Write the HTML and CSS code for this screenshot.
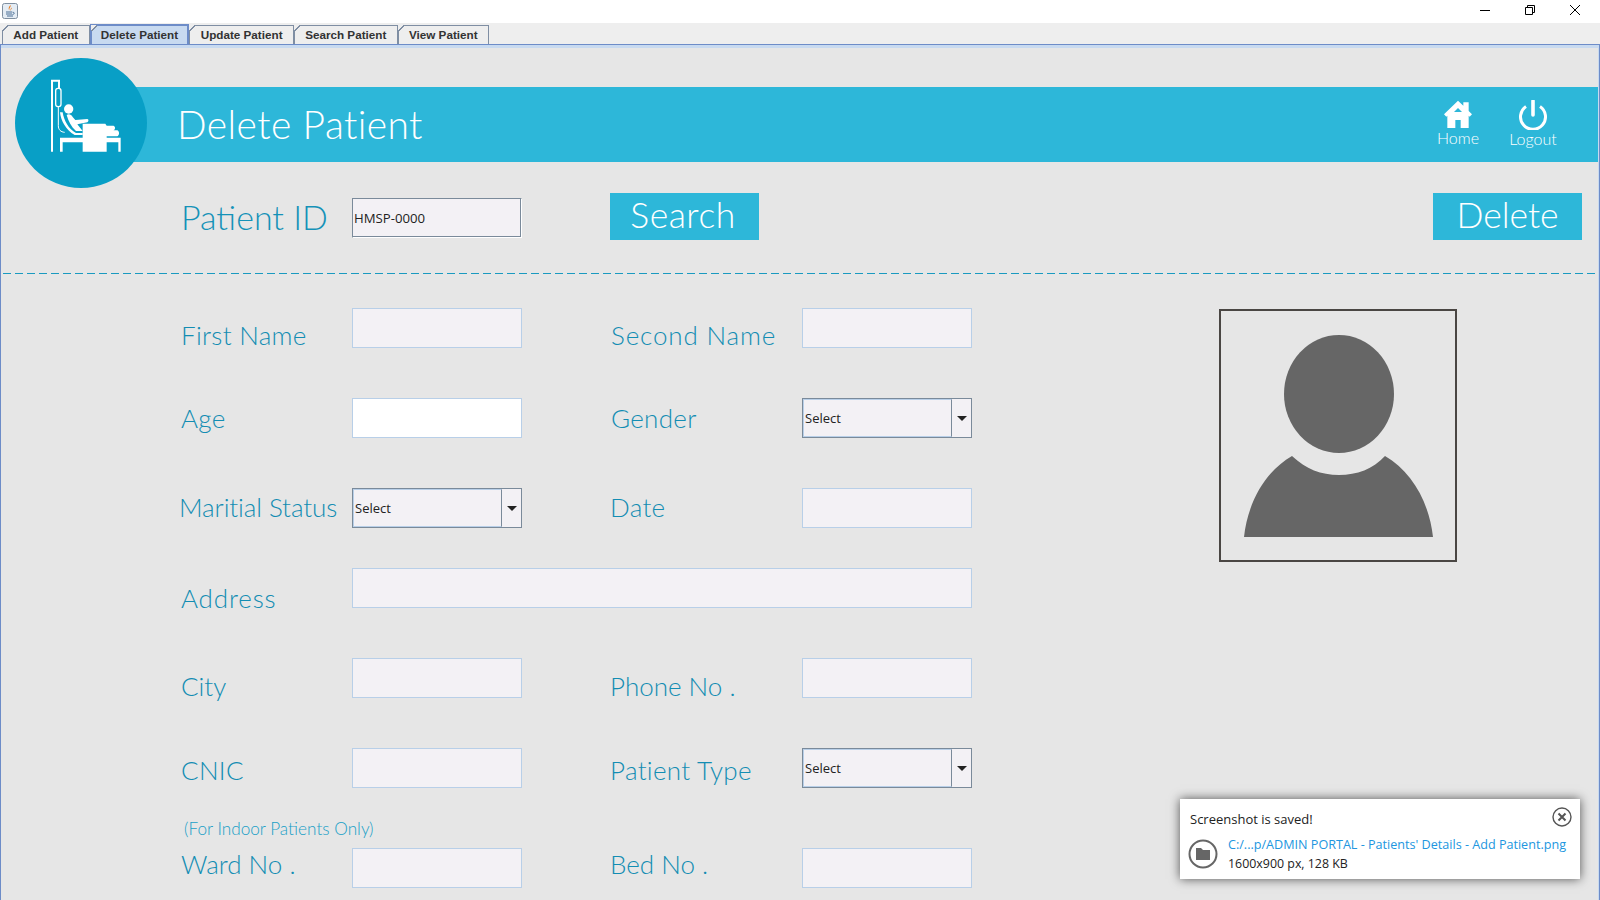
FILE: index.html
```html
<!DOCTYPE html>
<html lang="en">
<head>
    <meta charset="UTF-8">
    <meta name="viewport" content="width=device-width, initial-scale=1.0">
    <title>Delete Patient</title>
    <link rel="stylesheet" href="styles.css">
</head>
<body>
    <div id="window">
        <div class="titlebar">
            <svg class="app-icon" viewBox="0 0 16 16" width="16" height="16">
                <rect x="0.5" y="0.5" width="15" height="15" rx="2" fill="#e4ecf4" stroke="#7f8fa0"/>
                <path d="M8.5 2C9.5 4 6.5 5 7.5 7.5C6 6 6.5 4 8.5 2Z" fill="#e8791c"/>
                <path d="M10 4.5C9.8 6 8.5 6.5 9 8C8 7 8.5 5.5 10 4.5Z" fill="#e8791c"/>
                <path d="M4 9H10M4 11H10M5 13H11M10.5 9.2C13 9 12.5 11.5 10.5 11.5" fill="none" stroke="#4a6f96" stroke-width="1"/>
            </svg>
            <div class="win-controls">
                <svg viewBox="0 0 10 10" width="10" height="10"><path d="M0 5.5H10" stroke="#000" fill="none"/></svg>
                <svg viewBox="0 0 10 10" width="10" height="10"><path d="M0.5 2.5H7.5V9.5H0.5ZM2.5 2.5V0.5H9.5V7.5H7.5" stroke="#000" fill="none"/></svg>
                <svg viewBox="0 0 10 10" width="10" height="10"><path d="M0 0L10 10M10 0L0 10" stroke="#000" fill="none"/></svg>
            </div>
        </div>

        <div class="tabs">
            <div class="tab">Add Patient</div>
            <div class="tab active">Delete Patient</div>
            <div class="tab">Update Patient</div>
            <div class="tab">Search Patient</div>
            <div class="tab">View Patient</div>
        </div>

        <div class="panel">
            <div class="banner">
                <div class="logo">
                    <svg viewBox="15 9 396 390" width="132" height="130">
                        <path d="M126 290V77H147V100" fill="none" stroke="#fff" stroke-width="6"/>
                        <rect x="137" y="100" width="16" height="55" rx="7" fill="none" stroke="#fff" stroke-width="4"/>
                        <path d="M145 155V212C145 224 152 231 164 232" fill="none" stroke="#fff" stroke-width="3"/>
                        <circle cx="176" cy="162" r="14" fill="#fff"/>
                        <path d="M150 172C152 196 168 226 194 240H218V234H198C176 222 162 198 158 172Z" fill="#fff"/>
                        <path d="M170 180C176 176 184 178 188 186L196 195L232 192C237 193 236 200 232 202L202 208L218 228H198C184 216 175 198 170 180Z" fill="#fff"/>
                        <path d="M218 206H286L290 212H310C317 214 317 224 310 226H322C329 228 329 242 322 244H290V248H332V290H325V262H290V290H218V262H158V290H150V248H218Z" fill="#fff"/>
                    </svg>
                </div>
                <h1 class="banner-title">Delete Patient</h1>
                <div class="banner-links">
                    <div class="banner-link">
                        <svg viewBox="0 0 84 84" width="28" height="28">
                            <path fill="#fff" fill-rule="evenodd" d="M42 2L58 17V7H74V33L84 43L77 50L74 47V84H50V60H34V84H10V47L7 50L0 43ZM42 24L30 36H54Z"/>
                        </svg>
                        <span>Home</span>
                    </div>
                    <div class="banner-link link-logout">
                        <svg viewBox="0 0 30 30" width="30" height="30">
                            <path d="M8 6.5A12.5 12.5 0 1 0 22 6.5" fill="none" stroke="#fff" stroke-width="3"/>
                            <path d="M15 1V15" stroke="#fff" stroke-width="3.6" stroke-linecap="round"/>
                        </svg>
                        <span>Logout</span>
                    </div>
                </div>
            </div>

            <div class="search-row">
                <label class="id-label">Patient ID</label>
                <input class="id-input" type="text" value="HMSP-0000">
                <button class="action-btn search-btn">Search</button>
                <button class="action-btn delete-btn">Delete</button>
            </div>

            <div class="divider"></div>

            <div class="details">
                <div class="form">
                    <div class="row row-first">
                        <label class="field-label">First Name</label>
                        <input class="field" type="text">
                        <label class="field-label second wide-label">Second Name</label>
                        <input class="field" type="text">
                    </div>
                    <div class="row row-mid">
                        <label class="field-label">Age</label>
                        <input class="field field-white" type="text">
                        <label class="field-label second">Gender</label>
                        <div class="select"><span class="select-text">Select</span><span class="select-arrow"></span></div>
                    </div>
                    <div class="row row-mid row-marital">
                        <label class="field-label marital">Maritial Status</label>
                        <div class="select"><span class="select-text">Select</span><span class="select-arrow"></span></div>
                        <label class="field-label second tight">Date</label>
                        <input class="field" type="text">
                    </div>
                    <div class="row row-address">
                        <label class="field-label wide-label">Address</label>
                        <input class="field field-wide" type="text">
                    </div>
                    <div class="row row-city">
                        <label class="field-label">City</label>
                        <input class="field" type="text">
                        <label class="field-label second tight">Phone No .</label>
                        <input class="field" type="text">
                    </div>
                    <div class="row row-cnic">
                        <label class="field-label">CNIC</label>
                        <input class="field" type="text">
                        <label class="field-label second tight">Patient Type</label>
                        <div class="select"><span class="select-text">Select</span><span class="select-arrow"></span></div>
                    </div>
                    <div class="note">(For Indoor Patients Only)</div>
                    <div class="row row-ward">
                        <label class="field-label">Ward No .</label>
                        <input class="field" type="text">
                        <label class="field-label second tight">Bed No .</label>
                        <input class="field" type="text">
                    </div>
                </div>

                <div class="photo">
                    <svg viewBox="0 0 234 249" width="234" height="249">
                        <ellipse cx="118" cy="83" rx="55" ry="59" fill="#666"/>
                        <path d="M23 226C27 190 45 160 71 145C85 158 100 164 118 164C136 164 152 158 164 145C190 160 208 190 212 226Z" fill="#666"/>
                    </svg>
                </div>
            </div>
        </div>

        <div class="toast">
            <div class="toast-title">Screenshot is saved!</div>
            <svg class="toast-close" viewBox="0 0 20 20" width="20" height="20">
                <circle cx="10" cy="10" r="9" fill="none" stroke="#555" stroke-width="1.4"/>
                <path d="M6.5 6.5L13.5 13.5M13.5 6.5L6.5 13.5" stroke="#555" stroke-width="2"/>
            </svg>
            <div class="toast-body">
                <svg viewBox="0 0 30 30" width="30" height="30">
                    <circle cx="15" cy="15" r="13.5" fill="none" stroke="#666" stroke-width="2"/>
                    <path d="M8 9H13L15 11H22V21H8Z" fill="#666"/>
                </svg>
                <div>
                    <div class="toast-link">C:/...p/ADMIN PORTAL - Patients' Details - Add Patient.png</div>
                    <div class="toast-info">1600x900 px, 128 KB</div>
                </div>
            </div>
        </div>
    </div>
</body>
</html>
```

FILE: styles.css
```css
* {
    box-sizing: border-box;
}

body {
    margin: 0;
    font-family: "Liberation Sans", Arial, sans-serif;
    background: #e6e6e6;
}

#window {
    position: relative;
    width: 1600px;
    height: 900px;
    overflow: hidden;
    display: flex;
    flex-direction: column;
}

/* window chrome */
.titlebar {
    height: 23px;
    background: #fff;
    display: flex;
    justify-content: space-between;
    padding: 3px 0 0 2px;
    flex: none;
}

.win-controls {
    display: flex;
    gap: 35px;
    padding: 2px 20px 0 0;
}

.tabs {
    height: 21px;
    flex: none;
    background: #eeeeee;
    display: flex;
    align-items: flex-end;
    padding-left: 2px;
    gap: 1px;
}

.tab {
    position: relative;
    height: 19px;
    line-height: 18px;
    padding: 0 10.3px;
    font-size: 11.7px;
    font-weight: bold;
    color: #333;
    border: 1px solid #7f8ea3;
    border-bottom: none;
    background: #eeeeee;
    margin-right: -1px;
}

.tab::before {
    content: "";
    position: absolute;
    left: -1px;
    top: -1px;
    width: 6px;
    height: 6px;
    background: linear-gradient(135deg, #eeeeee 45%, #7f8ea3 45%, #7f8ea3 60%, transparent 60%);
}

.tab.active {
    background: #c8daf0;
    border: 2px solid #6d8cc8;
    border-bottom: none;
    height: 20px;
    padding: 0 9.3px;
    line-height: 18px;
    z-index: 1;
}

.panel {
    flex: 1;
    border: 1px solid #6d8cc8;
    border-bottom: none;
    border-top: 1px solid #6d8cc8;
    box-shadow: inset 0 3px 0 #c8daf0, inset -1px 0 0 #c8daf0;
    background: #e6e6e6;
    padding: 42px 1px 0 0;
}

/* header band */
.banner {
    position: relative;
    height: 75px;
    margin-left: 80px;
    background: #2db7d9;
    display: flex;
    align-items: center;
    color: #fff;
}

.logo {
    position: absolute;
    left: -66px;
    top: -29px;
    width: 132px;
    height: 130px;
    border-radius: 50%;
    background: #089fc6;
    line-height: 0;
}

.banner-title {
    margin: 0 0 2px 96px;
    font-family: Lato, sans-serif;
    font-weight: 300;
    font-size: 39px;
    letter-spacing: 0.4px;
}

.banner-links {
    margin-left: auto;
    display: flex;
    gap: 27px;
    padding: 0 41px 2px 0;
}

.banner-link {
    width: 48px;
    display: flex;
    flex-direction: column;
    align-items: center;
    gap: 2px;
    font-family: Lato, sans-serif;
    font-size: 16px;
    font-weight: 300;
    line-height: 16px;
}

.link-logout svg {
    margin-bottom: -1px;
}

/* search row */
.search-row {
    display: flex;
    align-items: center;
    height: 47px;
    margin-top: 31px;
    padding: 0 16px 0 180px;
}

.id-label {
    width: 171px;
    font-family: Lato, sans-serif;
    font-weight: 300;
    font-size: 34px;
    color: #1592b8;
}

.id-input {
    width: 170px;
    height: 40px;
    margin-top: 2px;
    padding: 0 1px;
    border: 1px solid #7a8a9a;
    border-right-color: #fff;
    border-bottom-color: #fff;
    box-shadow: inset -1px -1px 0 #7a8a9a;
    background: #f3f1f5;
    font-family: "Open Sans", sans-serif;
    font-size: 13.2px;
    color: #222;
    outline: none;
}

.action-btn {
    width: 149px;
    height: 47px;
    border: none;
    background: #2db7d9;
    color: #fff;
    font-family: Lato, sans-serif;
    font-weight: 300;
    font-size: 35.5px;
    padding: 0 0 4px;
}

.search-btn {
    margin-left: 88px;
    padding: 0 3px 8px 0;
    letter-spacing: 0.5px;
}

.delete-btn {
    margin-left: auto;
}

.divider {
    margin: 33px 1px 0 2px;
    height: 1px;
    background: repeating-linear-gradient(to right, #1a9ac0 0 8px, transparent 8px 12px);
}

/* form */
.details {
    display: flex;
    padding: 34px 0 0 180px;
}

.form {
    width: 791px;
    flex: none;
}

.row {
    display: flex;
    height: 40px;
}

.row-mid {
    margin-top: 50px;
}

.row-address {
    margin-top: 40px;
}

.row-city,
.row-cnic {
    margin-top: 50px;
}

.field-label {
    width: 171px;
    height: 40px;
    line-height: 40px;
    font-family: Lato, sans-serif;
    font-weight: 300;
    font-size: 26px;
    color: #138db3;
    letter-spacing: 0.3px;
    white-space: nowrap;
}

.field-label.second {
    width: 191px;
    margin-left: 89px;
}

.field-label.tight {
    width: 192px;
    margin-left: 88px;
}

.wide-label {
    letter-spacing: 0.85px;
}

.field-label.marital {
    margin-left: -2px;
    margin-right: 2px;
    letter-spacing: -0.1px;
}

.row-first .field-label {
    margin-top: 7px;
}

.row-marital .field-label {
    margin-top: -1px;
}

.row-address .field-label {
    margin-top: 10px;
}

.row-city .field-label {
    margin-top: 8px;
    letter-spacing: 0;
}

.row-cnic .field-label {
    margin-top: 2px;
}

.row-ward .field-label {
    margin-top: -4px;
    letter-spacing: 0;
}

.field {
    width: 170px;
    height: 40px;
    padding: 0 2px;
    border: 1px solid #b8cfe8;
    background: #f3f1f5;
    outline: none;
}

.field-white {
    background: #fff;
}

.field-wide {
    width: 620px;
}

.select {
    width: 170px;
    height: 40px;
    display: flex;
    border: 1px solid #7a8a9a;
    background: #f3f1f5;
}

.select-text {
    flex: 1;
    border: 1px solid #b8cfe8;
    border-right: 1px solid #7a8a9a;
    line-height: 36px;
    padding-left: 1px;
    font-family: "Open Sans", sans-serif;
    font-size: 13px;
    color: #222;
}

.select-arrow {
    width: 19px;
    display: flex;
    align-items: center;
    justify-content: center;
}

.select-arrow::after {
    content: "";
    border-left: 5px solid transparent;
    border-right: 5px solid transparent;
    border-top: 5px solid #222;
}

.note {
    height: 20px;
    margin: 31px 0 9px 3px;
    line-height: 20px;
    font-family: Lato, sans-serif;
    font-weight: 300;
    font-size: 17.2px;
    color: #1aa0c6;
}

.photo {
    width: 238px;
    height: 253px;
    margin: 1px 0 0 247px;
    border: 2px solid #4a4643;
    line-height: 0;
}

/* screenshot toast */
.toast {
    position: absolute;
    left: 1180px;
    top: 799px;
    width: 400px;
    height: 80px;
    background: #fff;
    box-shadow: 0 0 10px rgba(0, 0, 0, 0.65);
    font-family: "Open Sans", sans-serif;
    font-size: 12.4px;
    color: #222;
    padding: 11px 8px 0 10px;
}

.toast-title {
    height: 18px;
    line-height: 18px;
    font-size: 13px;
}

.toast-close {
    position: absolute;
    right: 8px;
    top: 8px;
}

.toast-body {
    display: flex;
    align-items: center;
    gap: 10px;
    margin-top: 7px;
    margin-left: -2px;
}

.toast-link {
    color: #2196e0;
    line-height: 19px;
    font-size: 12.6px;
}

.toast-info {
    line-height: 19px;
}
```
